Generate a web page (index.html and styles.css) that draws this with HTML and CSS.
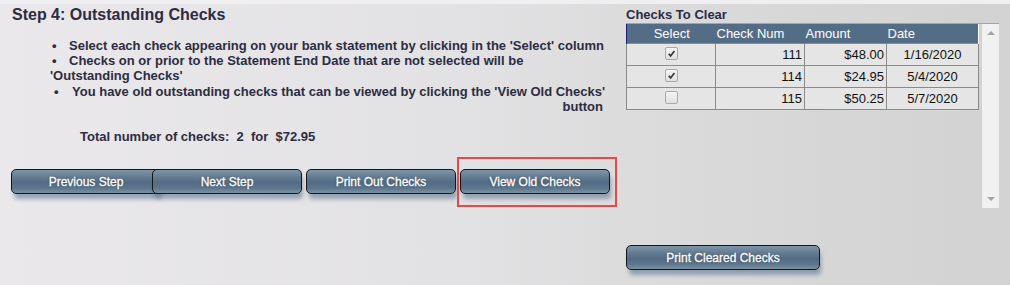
FILE: index.html
```html
<!DOCTYPE html>
<html lang="en">
<head>
  <meta charset="UTF-8" />
  <title>Reconcile - Step 4</title>
  <link rel="stylesheet" href="styles.css">
</head>
<body>
  <div class="page">
    <div class="left">
      <h2 class="step-title">Step 4: Outstanding Checks</h2>
      <ul class="notes">
        <li>Select each check appearing on your bank statement by clicking in the 'Select' column</li>
        <li>Checks on or prior to the Statement End Date that are not selected will be<br>'Outstanding Checks'</li>
        <li class="wide-bullet">You have old outstanding checks that can be viewed by clicking the 'View Old Checks' <span class="end">button</span></li>
      </ul>
      <p class="total">Total number of checks:&nbsp; 2&nbsp; for&nbsp; $72.95</p>

      <div class="nav-buttons">
        <button class="btn">Previous Step</button>
        <button class="btn overlap">Next Step</button>
        <button class="btn">Print Out Checks</button>
        <span class="highlight"><button class="btn">View Old Checks</button></span>
      </div>
    </div>

    <div class="right">
      <div class="panel-title">Checks To Clear</div>
      <div class="grid-box">
        <table class="grid">
          <colgroup>
            <col class="c1"><col class="c2"><col class="c3"><col class="c4">
          </colgroup>
          <thead>
            <tr>
              <th class="center">Select</th>
              <th>Check Num</th>
              <th>Amount</th>
              <th>Date</th>
            </tr>
          </thead>
          <tbody>
            <tr>
              <td class="center"><span class="cb on"><svg viewBox="0 0 12 12"><path d="M3 6.2 L5 8.6 L9.2 3.2" /></svg></span></td>
              <td class="num">111</td>
              <td class="num">$48.00</td>
              <td class="center">1/16/2020</td>
            </tr>
            <tr>
              <td class="center"><span class="cb on"><svg viewBox="0 0 12 12"><path d="M3 6.2 L5 8.6 L9.2 3.2" /></svg></span></td>
              <td class="num">114</td>
              <td class="num">$24.95</td>
              <td class="center">5/4/2020</td>
            </tr>
            <tr>
              <td class="center"><span class="cb"></span></td>
              <td class="num">115</td>
              <td class="num">$50.25</td>
              <td class="center">5/7/2020</td>
            </tr>
          </tbody>
        </table>
        <div class="scrollbar">
          <span class="arrow up"></span>
          <span class="arrow down"></span>
        </div>
      </div>
      <button class="btn print-cleared">Print Cleared Checks</button>
    </div>
  </div>
</body>
</html>
```

FILE: styles.css
```css
html, body {
  margin: 0;
  padding: 0;
}
body {
  background: #efeef0;
  font-family: "Liberation Sans", Arial, sans-serif;
  color: #2c2c42;
}
.page {
  margin-top: 4px;
  height: 281px;
  display: flex;
  background: linear-gradient(to right, #eae8eb 0%, #e2e1e3 45%, #d8d8d8 75%, #d2d2d2 100%);
}
.left {
  width: 614px;
  padding-left: 12px;
}
.step-title {
  margin: 2px 0 0 0;
  font-size: 16px;
  line-height: 18px;
  font-weight: bold;
}
.notes {
  list-style: none;
  margin: 14px 0 0 0;
  padding: 0 0 0 38px;
  width: 562px;
  font-size: 13px;
  font-weight: bold;
  line-height: 15.2px;
}
.notes li::before {
  content: "\2022";
  display: inline-block;
  width: 17px;
  padding-left: 2px;
}
.notes li.wide-bullet::before {
  width: 18px;
  padding-left: 4px;
}
.notes .end {
  display: block;
  text-align: right;
  margin-right: 9px;
}
.total {
  margin: 15px 0 0 68px;
  font-size: 13px;
  font-weight: bold;
  line-height: 15px;
}
.nav-buttons {
  display: flex;
  margin-top: 25px;
  margin-left: -1px;
}
.btn {
  width: 150px;
  height: 25px;
  padding: 0;
  border: 1px solid #161616;
  border-radius: 5px;
  background: linear-gradient(#7f95a8 0%, #647c92 30%, #536c84 55%, #5f778d 80%, #7b91a4 100%);
  color: #fff;
  font-family: "Liberation Sans", Arial, sans-serif;
  font-size: 12px;
  -webkit-text-stroke: 0.3px #fff;
  text-shadow: 0 0 2px rgba(20, 30, 45, 0.7);
  box-shadow: 2px 6px 4px -1px rgba(80, 110, 140, 0.55);
  margin-right: 4px;
}
.btn.overlap {
  margin-left: -13px;
}
.highlight {
  position: relative;
  display: flex;
}
.highlight::after {
  content: "";
  position: absolute;
  left: -3px;
  top: -12px;
  right: -3px;
  bottom: -13px;
  border: 2px solid #f04545;
}
.right {
  width: 373px;
}
.panel-title {
  margin-top: 3px;
  font-size: 13px;
  font-weight: bold;
  line-height: 15px;
  color: #2b2b48;
}
.grid-box {
  margin-top: 1px;
  width: 373px;
  height: 184px;
  border-top: 1px solid #a4a4a4;
  display: flex;
  justify-content: space-between;
}
.grid {
  width: 352px;
  border-collapse: collapse;
  align-self: flex-start;
  font-size: 13px;
  table-layout: fixed;
}
.c1 { width: 89px; }
.c2 { width: 89px; }
.c3 { width: 82px; }
.c4 { width: 92px; }
.grid th {
  background: #536d87;
  color: #fff;
  font-weight: normal;
  text-align: left;
  height: 19px;
  padding: 0 0 0 1px;
  line-height: 19px;
}
.grid th:first-child {
  border-left: 1px solid #1c1c70;
}
.grid th:last-child {
  border-right: 1px solid #fff;
}
.grid th.center {
  text-align: center;
}
.grid td {
  background: #e5e5e5;
  border: 1px solid #8a8a8a;
  height: 21px;
  padding: 0 2px;
  line-height: 21px;
  color: #111;
}
.grid td.num {
  text-align: right;
}
.grid .center {
  text-align: center;
}
.cb {
  display: inline-block;
  width: 11px;
  height: 11px;
  border: 1px solid #a9a9a9;
  border-radius: 2px;
  background: linear-gradient(#f4f4f4, #e0e0e0);
  vertical-align: -1px;
}
.cb svg {
  display: block;
  width: 11px;
  height: 11px;
}
.cb path {
  fill: none;
  stroke: #333;
  stroke-width: 1.8;
}
.scrollbar {
  width: 17px;
  background: #f1f1f1;
  display: flex;
  flex-direction: column;
  justify-content: space-between;
  align-items: center;
  padding: 7px 0 7px;
}
.arrow {
  width: 0;
  height: 0;
  border-left: 4px solid transparent;
  border-right: 4px solid transparent;
}
.arrow.up {
  border-bottom: 4px solid #a3a3a3;
}
.arrow.down {
  border-top: 4px solid #a3a3a3;
}
.print-cleared {
  width: 194px;
  margin-top: 37px;
}
```
